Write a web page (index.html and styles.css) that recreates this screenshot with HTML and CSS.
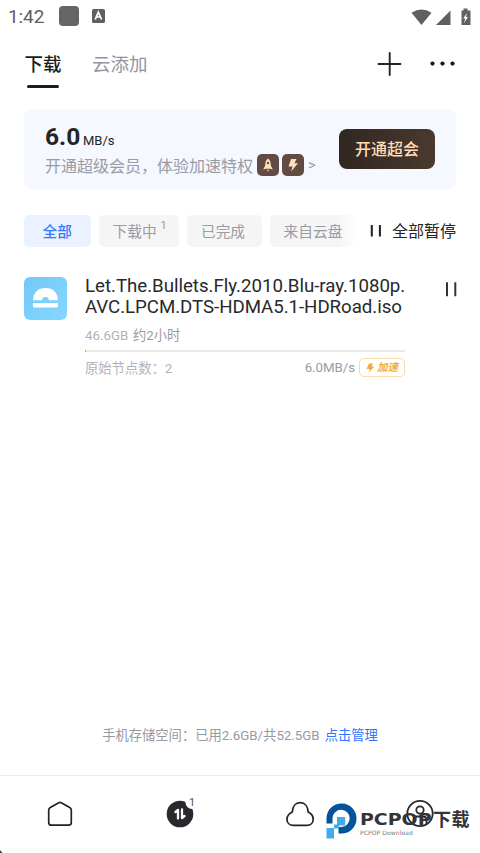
FILE: index.html
```html
<!DOCTYPE html>
<html lang="zh-CN">
<head>
<meta charset="utf-8">
<title>下载</title>
<link rel="stylesheet" href="styles.css">
</head>
<body>
<div class="app">
  <header class="status">
    <span class="clock">1:42</span>
    <span class="status-square"></span>
    <svg class="status-a" width="13" height="14" viewBox="0 0 13 14"><rect width="13" height="14" rx="1.5" fill="#5f5f5f"/><path d="M3.2 10.5 6.3 3.2 9.6 10.5M4.5 8h4" fill="none" stroke="#fff" stroke-width="1.7"/></svg>
    <svg class="status-right" width="60" height="20" viewBox="0 0 60 20"><path d="M.5 4.7Q10.500-1.700 20.500 4.700L10.500 17Z" fill="#606060"/><path d="M25 17 39.500 2.500V17Z" fill="#606060"/><path d="M50.500 2.500h2V.500h4v2h3V17h-9Z" fill="#606060"/><path d="M55.800 5 52.300 10.500h2L53 15l4-6h-2Z" fill="#fff"/></svg>
  </header>
  <nav class="tabs">
    <span class="tab tab-active">下载</span>
    <span class="tab tab-cloud">云添加</span>
    <svg class="top-icons" width="80" height="26" viewBox="0 0 80 26"><path d="M1.500 13h22M12.700 2v22" stroke="#222428" stroke-width="1.900" stroke-linecap="round"/><g fill="#15171a"><circle cx="55.500" cy="12.600" r="2.100"/><circle cx="65.500" cy="12.600" r="2.100"/><circle cx="75.500" cy="12.600" r="2.100"/></g></svg>
  </nav>
  <section class="vip">
    <div class="vip-info">
      <div class="speed"><b>6.0</b><span>MB/s</span></div>
      <div class="promo"><span class="promo-text">开通超级会员，体验加速特权</span>
        <svg class="perk" width="22" height="22" viewBox="0 0 22 22"><rect width="22" height="22" rx="5" fill="#624b42"/><path d="M11 4.500C8.500 6.500 8.200 9 8.200 11.500L6.200 15.500 9 14.800h4l2.800.700-2-4C13.800 9 13.500 6.500 11 4.500Z" fill="#ffe0bd"/><circle cx="11" cy="9" r="1.200" fill="#624b42"/><path d="M10 15.800h2L11 18Z" fill="#ffe0bd"/></svg>
        <svg class="perk perk-bolt" width="22" height="22" viewBox="0 0 22 22"><rect width="22" height="22" rx="5" fill="#624b42"/><path d="M9 5h5.500L12.500 9.300H16L9.200 17.500 10.500 12.500H6.500Z" fill="#ffe0bd"/></svg>
        <span class="more">&gt;</span></div>
    </div>
    <span class="vip-button">开通超会</span>
  </section>
  <section class="filters">
    <div class="chips">
      <span class="chip chip-on">全部</span>
      <span class="chip chip-count">下载中<sup>1</sup></span>
      <span class="chip chip-done">已完成</span>
      <span class="chip chip-last">来自云盘</span>
    </div>
    <svg class="pause-small" width="12" height="12" viewBox="0 0 12 12"><path d="M1.800.800v10M9.900.800v10" stroke="#24262a" stroke-width="2.100" stroke-linecap="round"/></svg>
    <span class="pause-all">全部暂停</span>
  </section>
  <article class="task">
    <svg class="file-icon" width="43" height="43" viewBox="0 0 43 43"><defs><linearGradient id="blue" x1="0" y1="0" x2="1" y2="1"><stop stop-color="#71c8f8"/><stop offset="1" stop-color="#87d7ff"/></linearGradient></defs><rect width="43" height="43" rx="6" fill="url(#blue)"/><path d="M9 23.300C9.200 15.500 14 10.900 21.500 10.900S33.800 15.500 34 23.300H24.800A3.300 3.300 0 0 0 18.200 23.300Z" fill="#fff"/><rect x="9" y="26.100" width="25" height="4.300" rx=".8" fill="#fff"/></svg>
    <div class="task-body">
      <div class="title"><div class="title-a">Let.The.Bullets.Fly.2010.Blu-ray.1080p.</div><div class="title-b">AVC.LPCM.DTS-HDMA5.1-HDRoad.iso</div></div>
      <div class="meta"><span class="size">46.6GB</span><span class="eta">约2小时</span></div>
      <div class="progress"><i></i></div>
      <div class="detail"><span class="nodes">原始节点数：2</span><span class="rate">6.0MB/s</span><span class="boost"><svg width="9" height="10" viewBox="0 0 9 10"><path d="M3 .5h4L5.600 3.500H8.500L2.700 9.500 3.700 6H.500Z" fill="#efac3c"/></svg><em>加速</em></span></div>
    </div>
    <svg class="pause" width="12" height="17" viewBox="0 0 12 17"><path d="M2 1.300v14M10.300 1.300v14" stroke="#303236" stroke-width="2"/></svg>
  </article>
  <div class="spacer"></div>
  <div class="storage"><span class="storage-text">手机存储空间：已用2.6GB/共52.5GB</span><span class="manage">点击管理</span></div>
  <footer class="bottom">
    <div class="nav-item"><svg width="28" height="30" viewBox="0 0 28 30"><path d="M12.700 3.700Q14 2.900 15.300 3.700L23.700 8.500Q25.300 9.500 25.300 11V23.500Q25.300 26.200 22.500 26.200H5.500Q2.700 26.200 2.700 23.500V11Q2.700 9.500 4.300 8.500Z" fill="none" stroke="#202226" stroke-width="1.700"/></svg></div>
    <div class="nav-item"><svg width="28" height="30" viewBox="0 0 28 30"><circle cx="14" cy="15" r="13.300" fill="#27292c"/><circle cx="26" cy="3.500" r="6.500" fill="#fff"/><path d="M9.500 13 12 11V19.500M16 10.500V19L18.500 17" fill="none" stroke="#fff" stroke-width="2.300" stroke-linejoin="round" stroke-linecap="round"/></svg><span class="nav-badge">1</span></div>
    <div class="nav-item"><svg width="30" height="30" viewBox="0 0 30 30"><path d="M7.300 13C7.600 7.500 10.500 3.700 15.200 3.700S22.900 7.500 23.200 13C26.800 14.700 28.200 17.300 28.200 20.200C28.200 24 25.500 26.300 22 26.300H8.300C4.800 26.300 2 24 2 20.200C2 17.300 3.800 14.700 7.300 13Z" fill="none" stroke="#202226" stroke-width="1.700"/></svg></div>
    <div class="nav-item"><svg width="28" height="30" viewBox="0 0 28 30"><g fill="none" stroke="#27292c" stroke-width="1.800"><circle cx="14" cy="14.500" r="12.700"/><circle cx="14" cy="11" r="3.700"/><path d="M7.500 25V21Q7.500 17.500 11 17.500H17Q20.500 17.500 20.500 21V25"/></g></svg></div>
    <svg class="corner" width="3" height="4" viewBox="0 0 3 4"><path d="M0 1 2.500 4H0Z" fill="#444"/></svg>
    <div class="brand">
      <svg width="34" height="38" viewBox="0 0 34 38"><path d="M1.500 21.500V16A15 15 0 1 1 16.500 31.500H13.500V25H16.500A8.600 8.600 0 1 0 7.500 16V21.500Z" fill="#05539a"/><path d="M12 15h8.200v8.500H14v3H9V36.500H1.500V26H9V22.500H12Z" fill="#45abe7"/></svg>
      <div class="brand-words"><span class="brand-main"><span class="brand-latin">PCPOP</span><span class="brand-cn">下载</span></span><span class="brand-sub">PCPOP Download</span></div>
    </div>
  </footer>
</div>
</body>
</html>
```
FILE: styles.css
```css
* { box-sizing: border-box; }
body { margin: 0; background: #fff; font-family: Roboto, "Noto Sans CJK SC", sans-serif; color: #222428; }
.app { height: 853px; display: flex; flex-direction: column; overflow: hidden; white-space: nowrap; }
.status { height: 32px; display: flex; align-items: center; padding: 0 8px; }
.clock { width: 51px; font-size: 19px; color: #606060; letter-spacing: -.1px; padding-top: 1px; }
.status-square { width: 20px; height: 20px; border-radius: 4px; background: #656565; }
.status-a { margin-left: 13px; }
.status-right { margin-right: 1px; margin-left: auto; margin-top: 4px; }
.tabs { height: 77px; display: flex; padding: 19px 23px 0 24.5px; align-items: flex-start; }
.tab { font-size: 18.500px; line-height: 28px; }
.tab-active { width: 67.500px; font-weight: 500; color: #1b1d20; }
.tab-active::after { content: ""; display: block; width: 32px; height: 3px; border-radius: 2px; background: #1b1d20; margin: 6px 0 0 2px; }
.tab-cloud { color: #9194a1; }
.top-icons { margin: 0 0 0 auto; }
.vip { height: 80px; margin: 0 24px; padding: 20px 21px 0 22px; display: flex; justify-content: space-between; background: #f5f8fe; border-radius: 8px; }
.vip-info { margin-top: -7px; }
.speed { height: 31px; display: flex; align-items: baseline; line-height: 29px; }
.speed b { font-size: 24.5px; width: 38px; margin-left: -1px; }
.speed span { font-size: 13px; }
.promo { display: flex; height: 24px; align-items: center; color: #999ba5; font-size: 16px; margin-left: -1px; }
.promo-text { width: 212px; }
.perk-bolt { margin-left: 3px; }
.more { margin-left: 4px; font-size: 15px; }
.vip-button { width: 96px; height: 40px; border-radius: 8px; background: linear-gradient(90deg, #302721, #4a392f); color: #ffdcb5; font-size: 16px; font-weight: 500; line-height: 42px; text-align: center; }
.filters { height: 33px; margin: 25px 24px 0; display: flex; align-items: center; }
.chips { width: 335px; display: flex; gap: 8px; overflow: hidden; }
.chip { height: 32px; flex: none; border-radius: 5px; background: #f5f5f5; color: #999ba5; font-size: 14.700px; line-height: 34px; text-align: center; }
.chip-on { width: 66.5px; background: #eaf2ff; color: #3478fa; font-weight: 500; }
.chip-count { width: 80.5px; display: flex; padding-left: 14px; }
.chip-count sup { font-size: 11px; line-height: 22px; margin-left: 4px; }
.chip-done { width: 75px; padding-right: 3px; }
.chip-last { width: 86px; background: linear-gradient(90deg, #f5f5f5 80%, #fff); }
.pause-small { margin-left: 11px; }
.pause-all { margin-left: auto; margin-top: -2px; font-size: 16px; }
.task { margin: 29px 23px 0 24px; display: flex; }
.file-icon { margin-top: 1px; }
.task-body { width: 320px; margin-left: 18px; }
.title { height: 44px; font-size: 18.700px; line-height: 21px; color: #28292b; }
.title-a { letter-spacing: -.03px; }
.title-b { letter-spacing: -.05px; }
.meta { height: 30px; display: flex; padding-top: 6px; font-size: 13.300px; line-height: 20px; color: #b0b3bc; }
.size { width: 48px; }
.eta { color: #9a9ca6; }
.progress { height: 2px; background: #e9e9e9; }
.progress i { display: block; width: 1px; height: 2px; background: #62c4fa; }
.detail { height: 31px; display: flex; align-items: center; font-size: 13.300px; color: #b0b3bc; }
.rate { margin-left: auto; color: #9a9ca6; letter-spacing: -.05px; }
.boost { width: 46px; height: 19px; margin-left: 4px; border: 1px solid #f9dda9; border-radius: 5px; display: flex; align-items: center; justify-content: center; gap: 2px; color: #efac3c; font-size: 10.500px; font-weight: 600; line-height: 17px; }
.pause { margin: 5px 0 0 auto; }
.spacer { flex: 1; }
.storage { height: 49px; display: flex; justify-content: center; font-size: 13.300px; line-height: 20px; color: #9699a3; }
.manage { color: #2f76ff; margin-left: 5px; }
.bottom { height: 78px; border-top: 1px solid #eaeaea; display: grid; grid-template-columns: repeat(4, 1fr); position: relative; }
.nav-item { display: flex; justify-content: center; padding-top: 23px; position: relative; }
.nav-badge { position: absolute; left: 69px; top: 19px; font-size: 11px; line-height: 15px; color: #55575b; }
.corner { position: absolute; left: 0; bottom: 0; }
.brand { position: absolute; left: 325px; top: 26px; display: flex; }
.brand-words { width: 118px; padding-top: 6px; margin-left: 1px; }
.brand-main { display: flex; height: 24px; color: #333436; align-items: center; }
.brand-latin { width: 73px; font: bold 15.5px/24px "DejaVu Sans", sans-serif; transform: scaleX(1.22); transform-origin: left; }
.brand-cn { font-size: 18px; line-height: 24px; font-weight: 700; letter-spacing: .5px; }
.brand-sub { display: block; font: 6px/7px "DejaVu Sans", sans-serif; letter-spacing: .1px; color: #777; margin-top: -3px; }
```
